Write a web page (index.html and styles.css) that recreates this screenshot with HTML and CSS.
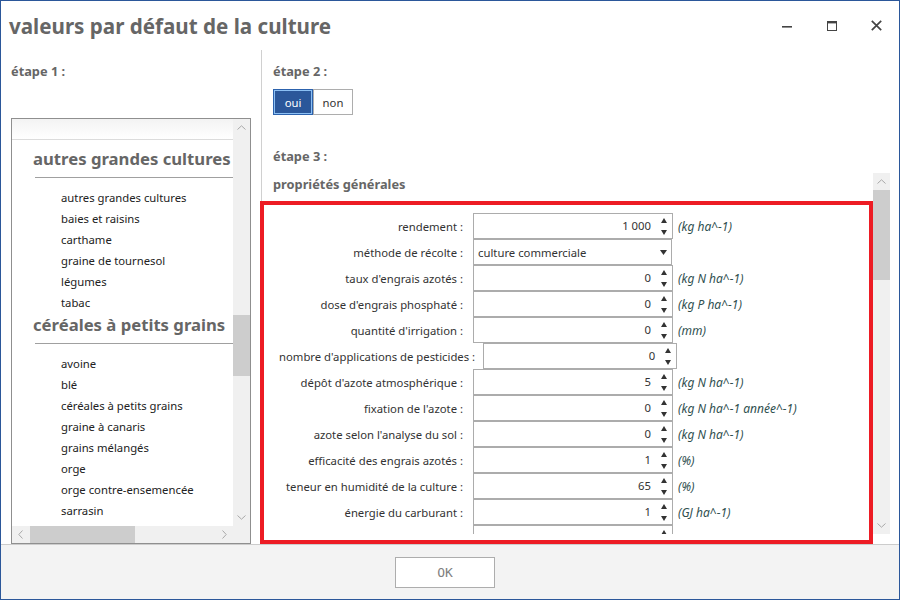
FILE: index.html
```html
<!DOCTYPE html>
<html lang="fr">
<head>
<meta charset="utf-8">
<title>valeurs par défaut de la culture</title>
<link rel="stylesheet" href="styles.css">
</head>
<body>
<div class="window">
  <header class="titlebar">
    <h1 class="title">valeurs par défaut de la culture</h1>
    <div class="controls">
      <span class="ctl"><svg width="10" height="10" viewBox="0 0 10 10"><rect x="0" y="5" width="10" height="1.6" fill="#444"/></svg></span>
      <span class="ctl"><svg width="10" height="10" viewBox="0 0 10 10"><rect x="0.5" y="0.5" width="9" height="9" fill="none" stroke="#444"/><rect x="0" y="0" width="10" height="2.4" fill="#444"/></svg></span>
      <span class="ctl"><svg width="11" height="11" viewBox="0 0 11 11"><path d="M0.8 0.8 L10.2 10.2 M10.2 0.8 L0.8 10.2" stroke="#444" stroke-width="1.7"/></svg></span>
    </div>
  </header>

  <div class="main">
    <section class="left">
      <div class="step">étape 1 :</div>
      <div class="listbox">
        <div class="list-view">
          <div class="list-band"></div>
          <div class="group-header first">autres grandes cultures</div>
          <div class="group-rule"></div>
          <div class="item">autres grandes cultures</div>
          <div class="item">baies et raisins</div>
          <div class="item">carthame</div>
          <div class="item">graine de tournesol</div>
          <div class="item">légumes</div>
          <div class="item">tabac</div>
          <div class="group-header">céréales à petits grains</div>
          <div class="group-rule"></div>
          <div class="item">avoine</div>
          <div class="item">blé</div>
          <div class="item">céréales à petits grains</div>
          <div class="item">graine à canaris</div>
          <div class="item">grains mélangés</div>
          <div class="item">orge</div>
          <div class="item">orge contre-ensemencée</div>
          <div class="item">sarrasin</div>
        </div>
        <div class="vscroll">
          <span class="sb-btn"><svg width="9" height="5" viewBox="0 0 9 5"><path d="M0.5 4.5 L4.5 0.8 L8.5 4.5" fill="none" stroke="#a8a8a8"/></svg></span>
          <div class="sb-track"><div class="thumb list-thumb"></div></div>
          <span class="sb-btn"><svg width="9" height="5" viewBox="0 0 9 5"><path d="M0.5 0.5 L4.5 4.2 L8.5 0.5" fill="none" stroke="#a8a8a8"/></svg></span>
        </div>
        <div class="hscroll">
          <span class="sb-btn"><svg width="5" height="9" viewBox="0 0 5 9"><path d="M4.5 0.5 L0.8 4.5 L4.5 8.5" fill="none" stroke="#a8a8a8"/></svg></span>
          <div class="sb-track-h"><div class="hthumb"></div></div>
          <span class="sb-btn"><svg width="5" height="9" viewBox="0 0 5 9"><path d="M0.5 0.5 L4.2 4.5 L0.5 8.5" fill="none" stroke="#a8a8a8"/></svg></span>
        </div>
        <div class="corner"></div>
      </div>
    </section>

    <section class="right">
      <div class="step">étape 2 :</div>
      <div class="toggle"><span class="tg on">oui</span><span class="tg">non</span></div>
      <div class="step step3">étape 3 :</div>
      <div class="scrollarea">
        <div class="scroll-content">
          <div class="section-title">propriétés générales</div>
          <div class="form">
            <div class="row"><span class="lbl">rendement :</span><div class="num"><span class="val">1 000</span><span class="spin"><svg width="6" height="5" viewBox="0 0 6 5"><path d="M3 0 L6 5 L0 5Z" fill="#333"/></svg><svg width="6" height="5" viewBox="0 0 6 5"><path d="M0 0 L6 0 L3 5Z" fill="#333"/></svg></span></div><span class="unit">(kg ha^-1)</span></div>
            <div class="row"><span class="lbl">méthode de récolte :</span><div class="select"><span>culture commerciale</span><svg width="7" height="5" viewBox="0 0 7 5"><path d="M0 0 L7 0 L3.5 5Z" fill="#333"/></svg></div></div>
            <div class="row"><span class="lbl">taux d'engrais azotés :</span><div class="num"><span class="val">0</span><span class="spin"><svg width="6" height="5" viewBox="0 0 6 5"><path d="M3 0 L6 5 L0 5Z" fill="#333"/></svg><svg width="6" height="5" viewBox="0 0 6 5"><path d="M0 0 L6 0 L3 5Z" fill="#333"/></svg></span></div><span class="unit">(kg N ha^-1)</span></div>
            <div class="row"><span class="lbl">dose d'engrais phosphaté :</span><div class="num"><span class="val">0</span><span class="spin"><svg width="6" height="5" viewBox="0 0 6 5"><path d="M3 0 L6 5 L0 5Z" fill="#333"/></svg><svg width="6" height="5" viewBox="0 0 6 5"><path d="M0 0 L6 0 L3 5Z" fill="#333"/></svg></span></div><span class="unit">(kg P ha^-1)</span></div>
            <div class="row"><span class="lbl">quantité d'irrigation :</span><div class="num"><span class="val">0</span><span class="spin"><svg width="6" height="5" viewBox="0 0 6 5"><path d="M3 0 L6 5 L0 5Z" fill="#333"/></svg><svg width="6" height="5" viewBox="0 0 6 5"><path d="M0 0 L6 0 L3 5Z" fill="#333"/></svg></span></div><span class="unit">(mm)</span></div>
            <div class="row"><span class="lbl">nombre d'applications de pesticides :</span><div class="num narrow"><span class="val">0</span><span class="spin"><svg width="6" height="5" viewBox="0 0 6 5"><path d="M3 0 L6 5 L0 5Z" fill="#333"/></svg><svg width="6" height="5" viewBox="0 0 6 5"><path d="M0 0 L6 0 L3 5Z" fill="#333"/></svg></span></div></div>
            <div class="row"><span class="lbl">dépôt d'azote atmosphérique :</span><div class="num"><span class="val">5</span><span class="spin"><svg width="6" height="5" viewBox="0 0 6 5"><path d="M3 0 L6 5 L0 5Z" fill="#333"/></svg><svg width="6" height="5" viewBox="0 0 6 5"><path d="M0 0 L6 0 L3 5Z" fill="#333"/></svg></span></div><span class="unit">(kg N ha^-1)</span></div>
            <div class="row"><span class="lbl">fixation de l'azote :</span><div class="num"><span class="val">0</span><span class="spin"><svg width="6" height="5" viewBox="0 0 6 5"><path d="M3 0 L6 5 L0 5Z" fill="#333"/></svg><svg width="6" height="5" viewBox="0 0 6 5"><path d="M0 0 L6 0 L3 5Z" fill="#333"/></svg></span></div><span class="unit">(kg N ha^-1 année^-1)</span></div>
            <div class="row"><span class="lbl">azote selon l'analyse du sol :</span><div class="num"><span class="val">0</span><span class="spin"><svg width="6" height="5" viewBox="0 0 6 5"><path d="M3 0 L6 5 L0 5Z" fill="#333"/></svg><svg width="6" height="5" viewBox="0 0 6 5"><path d="M0 0 L6 0 L3 5Z" fill="#333"/></svg></span></div><span class="unit">(kg N ha^-1)</span></div>
            <div class="row"><span class="lbl">efficacité des engrais azotés :</span><div class="num"><span class="val">1</span><span class="spin"><svg width="6" height="5" viewBox="0 0 6 5"><path d="M3 0 L6 5 L0 5Z" fill="#333"/></svg><svg width="6" height="5" viewBox="0 0 6 5"><path d="M0 0 L6 0 L3 5Z" fill="#333"/></svg></span></div><span class="unit">(%)</span></div>
            <div class="row"><span class="lbl">teneur en humidité de la culture :</span><div class="num"><span class="val">65</span><span class="spin"><svg width="6" height="5" viewBox="0 0 6 5"><path d="M3 0 L6 5 L0 5Z" fill="#333"/></svg><svg width="6" height="5" viewBox="0 0 6 5"><path d="M0 0 L6 0 L3 5Z" fill="#333"/></svg></span></div><span class="unit">(%)</span></div>
            <div class="row"><span class="lbl">énergie du carburant :</span><div class="num"><span class="val">1</span><span class="spin"><svg width="6" height="5" viewBox="0 0 6 5"><path d="M3 0 L6 5 L0 5Z" fill="#333"/></svg><svg width="6" height="5" viewBox="0 0 6 5"><path d="M0 0 L6 0 L3 5Z" fill="#333"/></svg></span></div><span class="unit">(GJ ha^-1)</span></div>
            <div class="row"><span class="lbl"></span><div class="num"><span class="val"></span><span class="spin"><svg width="6" height="5" viewBox="0 0 6 5"><path d="M3 0 L6 5 L0 5Z" fill="#333"/></svg><svg width="6" height="5" viewBox="0 0 6 5"><path d="M0 0 L6 0 L3 5Z" fill="#333"/></svg></span></div></div>
          </div>
        </div>
        <div class="vscroll vs-right">
          <span class="sb-btn"><svg width="9" height="5" viewBox="0 0 9 5"><path d="M0.5 4.5 L4.5 0.8 L8.5 4.5" fill="none" stroke="#a8a8a8"/></svg></span>
          <div class="sb-track"><div class="thumb right-thumb"></div></div>
          <span class="sb-btn"><svg width="9" height="5" viewBox="0 0 9 5"><path d="M0.5 0.5 L4.5 4.2 L8.5 0.5" fill="none" stroke="#a8a8a8"/></svg></span>
        </div>
      </div>
    </section>
  </div>

  <footer class="footer"><button class="ok" type="button">OK</button></footer>
  <div class="highlight"></div>
</div>
</body>
</html>
```
FILE: styles.css
```css
* { box-sizing: border-box; }
html, body { margin: 0; padding: 0; background: #fff; }
body {
  font-family: "Noto Sans", "Open Sans", sans-serif;
  font-size: 11.3px;
  color: #222;
}
.window {
  position: relative;
  width: 900px;
  height: 600px;
  border: 1px solid #2b579a;
  display: flex;
  flex-direction: column;
  background: #fff;
  overflow: hidden;
}
.titlebar {
  flex: none;
  height: 49px;
  display: flex;
  justify-content: space-between;
  align-items: flex-start;
}
.title {
  margin: 0;
  padding: 14px 0 0 8px;
  font-size: 20.6px;
  line-height: 22px;
  font-weight: 700;
  color: #666;
  white-space: nowrap;
}
.controls { display: flex; height: 49px; }
.ctl { width: 45px; display: flex; align-items: center; justify-content: center; }

.main { flex: none; height: 494px; display: flex; }
.left {
  flex: none;
  width: 261px;
  border-right: 1px solid #d0d0d0;
  padding-left: 10px;
}
.step {
  margin-top: 12px;
  font-weight: 700;
  color: #666;
  line-height: 18px;
  font-size: 12.8px;
}
.listbox {
  margin-top: 38px;
  width: 240px;
  height: 426px;
  border: 1px solid #8f8f8f;
  display: grid;
  grid-template-columns: 1fr 17px;
  grid-template-rows: 1fr 17px;
  overflow: hidden;
}
.list-view { overflow: hidden; min-width: 0; min-height: 0; }
.list-band {
  height: 21px;
  background: linear-gradient(#f3f3f3, #fff);
  border-bottom: 1px solid #dcdcdc;
}
.group-header {
  margin-left: 21px;
  font-size: 16.7px;
  font-weight: 700;
  color: #666;
  line-height: 24px;
  white-space: nowrap;
}
.group-header.first { margin-top: 7px; }
.group-rule {
  margin: 6px 0 9px 23px;
  border-top: 1px solid #a0a0a0;
}
.item {
  height: 21px;
  line-height: 21px;
  padding-left: 49px;
  white-space: nowrap;
  color: #222;
}
.vscroll {
  background: #f0f0f0;
  display: flex;
  flex-direction: column;
}
.sb-btn {
  flex: none;
  width: 17px;
  height: 17px;
  display: flex;
  align-items: center;
  justify-content: center;
}
.sb-track { flex: 1; }
.thumb { background: #cdcdcd; width: 17px; }
.list-thumb { margin-top: 179px; height: 61px; }
.right-thumb { height: 90px; }
.hscroll { background: #f0f0f0; display: flex; }
.sb-track-h { flex: 1; }
.hthumb { margin-left: 1px; width: 105px; height: 17px; background: #cdcdcd; }
.corner { background: #f0f0f0; }

.right {
  flex: 1;
  padding: 0 9px 0 11px;
  display: flex;
  flex-direction: column;
}
.toggle { margin-top: 9px; display: flex; height: 26px; }
.tg {
  width: 40px;
  height: 26px;
  display: flex;
  align-items: center;
  justify-content: center;
  border: 1px solid #adadad;
  background: #fff;
  color: #333;
}
.tg.on {
  background: #2b579a;
  border-color: #2c62ad;
  box-shadow: inset 0 0 0 1px #8cc0f4;
  color: #fff;
}
.step3 { margin-top: 32px; }
.scrollarea { margin-top: 8px; height: 361px; display: flex; }
.scroll-content { flex: 1; overflow: hidden; }
.section-title {
  font-weight: 700;
  color: #666;
  line-height: 22px;
  font-size: 12.8px;
}
.form { margin-top: 18px; }
.row { display: flex; align-items: center; height: 26px; padding-left: 6px; }
.lbl {
  flex: none;
  min-width: 184px;
  margin-right: 10px;
  text-align: right;
  white-space: nowrap;
  color: #333;
}
.num {
  flex: none;
  width: 200px;
  height: 26px;
  border: 1px solid #acacac;
  display: flex;
  background: #fff;
}
.num.narrow { width: 194px; margin-left: -2px; }
.val { flex: 1; text-align: right; line-height: 24px; color: #333; }
.spin {
  width: 21px;
  padding-left: 10px;
  display: flex;
  flex-direction: column;
  justify-content: center;
  gap: 7px;
}
.select {
  flex: none;
  width: 199px;
  height: 26px;
  border: 1px solid #acacac;
  display: flex;
  align-items: center;
  justify-content: space-between;
  padding: 0 4px 0 4px;
  color: #333;
}
.unit {
  margin-left: 5px;
  font-size: 12px;
  font-style: italic;
  color: #2f4f4f;
  white-space: nowrap;
}
.vs-right { width: 17px; flex: none; }

.footer {
  flex: none;
  height: 55px;
  border-top: 1px solid #cccccc;
  background: #f3f3f3;
  display: flex;
  justify-content: center;
  align-items: flex-start;
  padding: 12px 10px 0 0;
}
.ok {
  width: 100px;
  height: 31px;
  border: 1px solid #adadad;
  background: #fff;
  color: #808080;
  font-family: "DejaVu Sans Mono", monospace;
  font-size: 13px;
  padding: 0;
}
.highlight {
  position: absolute;
  left: 259px;
  top: 200px;
  width: 613px;
  height: 343px;
  border: 4px solid #ed1c24;
  pointer-events: none;
}
```
